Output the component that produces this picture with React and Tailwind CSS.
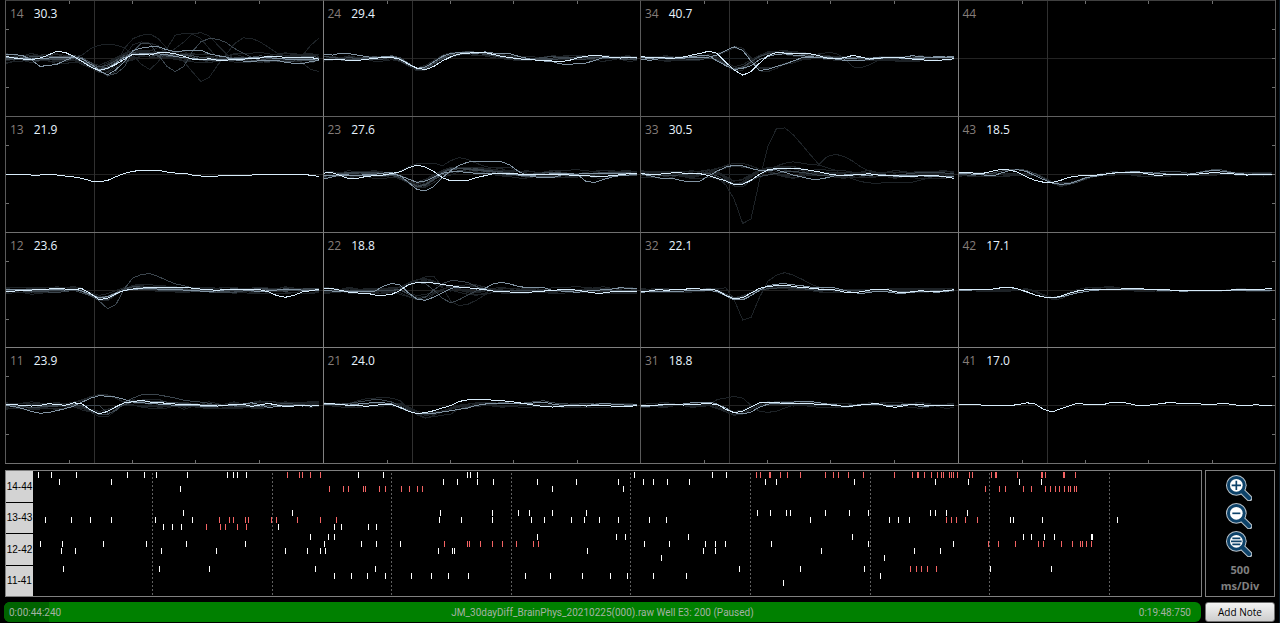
import { Fragment } from "react"

const SAMPLES = 38
const STEP = 25.46
const MID = 174

const COLORS = {
  bright: "#d8ecfb",
  mid: "#8193a2",
  dim: "#3c464e",
  faint: "#1d2226",
}

// samples outside the given window stay on the baseline
const pad = (start, values) =>
  Array.from({ length: SAMPLES }, (_, i) => values[i - start] ?? 0)

const SPIKE = pad(8, [-4, 2, 18, 32, 28, 12, -4, -12, -15, -16, -15, -12, -8, -5, -3])
const SMALL = pad(8, [-4, 2, 14, 24, 22, 10, 0, -5, -7, -8, -7, -5, -3])
const HILL = pad(7, [-3, -10, -18, -26, -30, -28, -20, -10, -4, 2, 6, 8, 5])
const LATE = pad(9, [-2, 8, 24, 32, 28, 22, 14, 6, 2, -2, -4, -3])

// slow wandering noise added on top of a base shape
const jitter = (base, amp, seed) => {
  let s = seed * 7919 + 17
  const next = () => {
    s = (s * 1103515245 + 12345) % 2147483648
    return (s / 2147483648) * 2 - 1
  }
  const knots = Array.from({ length: 14 }, () => next() * amp)
  return base.map((v, i) => {
    const k = Math.floor(i / 3)
    const t = (i % 3) / 3
    return v + knots[k] * (1 - t) + knots[k + 1] * t
  })
}

const bundle = (base, count, amp, tone, seed) =>
  Array.from({ length: count }, (_, i) => [tone, jitter(base, amp, seed + i * 3)])

const ELECTRODES = [
  {
    id: "14",
    value: "30.3",
    traces: [
      ...bundle(SPIKE, 8, 18, "faint", 3),
      ...bundle(SPIKE, 3, 10, "dim", 41),
      ["faint", pad(8, [-4, -10, -30, -40, -43, -40, -32, -10, 18, 34, 10, -30, -70, -76, -74, -60, -30, 0, 0, 4])],
      ["faint", pad(9, [4, 20, 30, 40, 20, -30, -60, -70, -74, -60, -30, -10, 10, 40, 70, 58, 20, -12, -44, -62, -61, -50, -34, -16, -8, -4, -8, -40, -62, -68])],
      ["faint", pad(10, [22, 36, 54, 40, -5, -42, -50, -46, -38, -10, -30, -50, -74, -78, -68, -40, -14, 0, 6, 8, 10, 12, 8, 6, 4, 14, 34, 40])],
      ["dim", pad(10, [22, 36, 52, 46, 26, -20, -46, -44, -10, 24, 40, 24, -20, -50, -60, -58, -48, -30, -16, -4, 6])],
      ["mid", [-12, -12, -8, 4, 24, 22, 18, 6, -4, 8, 26, 38, 50, 34, 10, -24, -31, -35, -35, -26, -20, -23, -25, -25, -14, -8, -4, 4, 8, 11, 6, 5, 6, 12, 15, 16, 10, 6]],
      ["mid", jitter(SPIKE, 4, 8)],
      ["bright", [-6, -1, 2, 4, -1, -10, -22, -18, -6, 10, 26, 37, 30, 18, 3, -13, -13, -10, -17, -18, -14, -6, 2, 4, 1, 6, 6, 2, 3, -1, -1, -7, -6, -3, -3, -3, -3, 3]],
    ],
  },
  {
    id: "24",
    value: "29.4",
    traces: [
      ...bundle(SPIKE, 7, 9, "faint", 12),
      ...bundle(SPIKE, 3, 6, "dim", 25),
      ["mid", [-13, -10, -16, -14, -10, -5, -2, -5, -6, 2, 16, 30, 26, 10, -6, -15, -18, -17, -15, -20, -16, -16, -14, -6, 0, 5, 8, 10, 17, 18, 16, 14, 6, -2, -3, -2, -2, -1]],
      ["bright", [3, 3, 2, 8, 6, 3, 0, -3, -3, 3, 18, 30, 34, 24, 8, -5, -13, -16, -17, -18, -12, -6, -2, 1, 4, 5, 6, 8, 10, 6, -2, -7, -8, -7, -3, -1, -2, -2]],
    ],
  },
  {
    id: "34",
    value: "40.7",
    traces: [
      ...bundle(SPIKE, 5, 9, "faint", 7),
      ...bundle(pad(8, [-8, -10, -20, -32, -24, 4, 34, 34, 26, 14, 6]), 3, 8, "faint", 33),
      ["faint", pad(20, [-8, -14, -17, -16, 0, 26, 28, 20, 6])],
      ["dim", jitter(SPIKE, 4, 18)],
      ["mid", [-2, 0, -2, -4, 0, 0, -6, -8, -8, 8, 22, 34, 30, 22, 4, -6, -12, -14, -10, -8, -6, -2, 0, 2, 6, 8, 6, 4, 0, -2, -4, -3, -8, -6, -2, -6, -4, -5]],
      ["mid", [2, 6, 2, 0, 0, -4, -2, -4, -4, -10, -24, -35, -24, 8, 37, 33, 25, 17, 8, -2, -3, -4, -3, 0, 2, 0, -2, 0, -3, -4, -2, 0, 2, 0, -2, -3, -2, -2]],
      ["bright", [-5, -3, -2, -1, -1, -4, -10, -15, -22, -15, 12, 35, 51, 40, 15, -8, -18, -16, -15, -14, -14, -8, -1, 2, -2, -9, -4, 2, 0, -3, -3, -2, 2, 4, 6, 6, 4, 1]],
    ],
  },
  { id: "44", value: "", traces: [] },
  {
    id: "13",
    value: "21.9",
    traces: [
      ["bright", [2, -1, -1, 2, 2, -1, 2, 5, 8, 12, 20, 23, 18, 7, -3, -9, -13, -13, -13, -7, -4, -4, 2, 5, 5, 5, 2, 2, 5, 2, -1, -1, -1, -1, -1, -1, 3, 6]],
    ],
  },
  {
    id: "23",
    value: "27.6",
    traces: [
      ...bundle(SPIKE, 7, 14, "faint", 9),
      ...bundle(SPIKE, 3, 8, "dim", 52),
      ["faint", pad(8, [0, -10, -24, -32, -34, -34, -26, -42, -51, -45, -34, -24, -20, -22, -20, -10, -4])],
      ["mid", jitter(SMALL, 5, 14)],
      ["mid", [14, 8, 0, 2, 4, 0, 0, -4, -6, 4, 25, 46, 50, 36, 10, -12, -28, -37, -40, -40, -40, -38, -28, -8, 3, 8, 11, 10, 2, -4, 2, 22, 24, 16, 8, 4, 2, -1]],
      ["bright", [-4, -5, 4, 14, 12, 6, 4, 2, -3, -8, -20, -28, -22, -8, 10, 20, 20, 18, 10, 4, -2, -3, -2, -1, -1, 0, 0, -1, 0, 2, 4, 4, 6, 6, 4, 1, -2, -4]],
    ],
  },
  {
    id: "33",
    value: "30.5",
    traces: [
      ...bundle(SPIKE, 7, 14, "faint", 19),
      ...bundle(HILL, 3, 8, "faint", 71),
      ["faint", pad(9, [10, 32, 75, 149, 135, 20, -85, -138, -141, -120, -90, -60, -30, -54, -61, -54, -40, -22, -10, -2])],
      ["faint", pad(14, [-10, -15, -25, -34, -38, -34, -30, -28, -20, -12, 4, 14, 22, 26, 27, 25, 24, 26, 24, 18, 10, 4])],
      ["dim", jitter(SMALL, 7, 12)],
      ["mid", [-2, 4, 10, 14, 14, 20, 23, 20, 4, -10, -22, -28, -26, -18, -12, -12, -14, -6, 2, 8, 14, 15, 10, 4, 2, 0, 2, 3, 0, 2, 6, 4, 2, 4, 6, 6, 6, 6]],
      ["bright", [-2, 0, 0, -3, -5, -4, -3, -2, 4, 12, 20, 31, 30, 18, 0, -14, -18, -18, -19, -16, -12, -8, -2, 2, 4, 2, 0, -2, 2, 4, 4, 6, 8, 4, 2, 4, 8, 12]],
    ],
  },
  {
    id: "43",
    value: "18.5",
    traces: [
      ...bundle(LATE, 5, 7, "faint", 5),
      ["dim", [0, 2, 2, 0, -4, -10, -14, -16, -12, -2, 12, 25, 32, 30, 24, 12, 4, 0, -3, -6, -8, -6, -4, -4, -8, -9, -8, -4, -4, -10, -14, -14, -8, -2, 0, -2, -2, -1]],
      ["mid", [-2, -2, 0, 2, 5, -4, -12, -14, -8, 4, 16, 26, 30, 28, 20, 10, 6, 2, -4, -7, -7, -8, -6, -4, -2, 0, 0, 0, -4, -8, -12, -10, -6, -3, 0, 0, -1, 0]],
      ["bright", [-6, -6, -3, -4, -10, -15, -13, -6, 8, 18, 24, 25, 18, 9, 5, 4, 3, 0, -3, -6, -6, -7, -3, 2, 2, 0, 0, 2, 0, -3, -5, -4, -2, 0, 2, 1, 0, -1]],
    ],
  },
  {
    id: "12",
    value: "23.6",
    traces: [
      ...bundle(SMALL, 7, 12, "faint", 4),
      ...bundle(SMALL, 3, 7, "dim", 23),
      ["dim", pad(9, [2, 14, 32, 56, 42, -5, -38, -48, -51, -42, -30, -20, -14, -8])],
      ["mid", jitter(SMALL, 5, 26)],
      ["bright", [4, 2, 0, -1, -2, -4, -6, -4, -3, -5, 10, 28, 24, 10, 0, -4, -7, -8, -9, -9, -9, -8, -7, -4, -2, 0, -4, -3, -2, -3, -2, 4, 16, 21, 15, 5, 1, -3]],
    ],
  },
  {
    id: "22",
    value: "18.8",
    traces: [
      ...bundle(HILL, 4, 11, "faint", 15),
      ...bundle(SMALL, 4, 11, "faint", 63),
      ["faint", pad(9, [-4, -18, -30, -42, -42, -10, 34, 46, 42, 30, 14, 4])],
      ["dim", pad(9, [-4, -16, -24, -20, 0, 24, 38, 28, 14, 2, -4])],
      ["dim", pad(9, [-2, 12, 27, 20, -2, -20, -30, -28, -24, -12])],
      ["mid", [0, 2, 2, 4, 4, 4, 2, -12, -21, -16, 8, 27, 30, 20, 8, -6, -10, -8, -4, -6, -20, -24, -19, -12, -8, -10, -8, 0, 2, 4, 6, 2, 0, -2, -4, -8, -6, -4]],
      ["bright", [-5, -5, 0, 6, 8, 8, 14, 15, 12, 0, -18, -24, -24, -22, -18, -14, -10, -8, -5, -2, 2, 4, 5, 6, 6, 4, 2, 0, -2, -3, 0, 4, 8, 8, 4, 2, 3, 4]],
    ],
  },
  {
    id: "32",
    value: "22.1",
    traces: [
      ...bundle(SMALL, 6, 7, "faint", 2),
      ["faint", pad(9, [-4, -8, 28, 90, 82, 22, -28, -46, -54, -46, -34, -20, -10])],
      ["dim", jitter(SMALL, 5, 35)],
      ["mid", [6, 4, 4, 2, 3, 2, 0, 0, 0, 4, 16, 29, 29, 16, 0, -14, -19, -20, -17, -14, -10, -8, -10, -7, 0, 6, 10, 6, 2, 4, 8, 9, 6, 3, 4, 6, 3, 0]],
      ["bright", [2, 2, -3, 0, -3, -3, -6, -4, -4, 0, 15, 26, 22, 8, -6, -12, -14, -16, -12, -8, -7, -4, -4, -1, 5, 8, 4, -1, -3, -3, 4, 8, 4, 1, 3, 4, 1, -2]],
    ],
  },
  {
    id: "42",
    value: "17.1",
    traces: [
      ...bundle(SMALL, 4, 5, "faint", 6),
      ["mid", [0, 0, -2, -2, -4, -8, -8, -4, 6, 14, 20, 22, 20, 14, 8, 3, 0, -2, -3, -3, -4, -4, -3, -2, 0, 0, 2, 2, 0, 0, 0, -1, -1, 0, 0, 0, -1, -1]],
      ["bright", [-2, -2, -3, -4, -4, -8, -10, -4, 4, 14, 20, 23, 18, 9, 2, -2, -4, -3, -3, -4, -5, -5, -4, -3, -2, -1, 0, 0, 0, 0, -1, 0, -1, -2, -4, -2, -4, -5]],
    ],
  },
  {
    id: "11",
    value: "23.9",
    traces: [
      ...bundle(SMALL, 7, 14, "faint", 11),
      ...bundle(HILL, 2, 8, "faint", 45),
      ["dim", pad(12, [24, 16, -10, -22, -32, -33, -32, -27, -22, -16, -12, -10, -6])],
      ["dim", jitter(SMALL, 7, 16)],
      ["mid", [0, 4, 10, 18, 24, 22, 16, 10, 2, -10, -22, -29, -28, -25, -18, -10, -8, -6, -4, -2, 0, 0, 0, 2, 3, 2, 0, 0, -4, -8, -2, 6, 4, 0, 0, 2, 0, 0]],
      ["bright", [-3, -2, 0, 2, 0, -5, -3, 0, -8, -4, 14, 26, 18, 4, -8, -11, -16, -10, -9, -6, -4, -4, -3, -1, 0, 2, 0, -4, -3, 3, -1, -6, -1, 4, 2, 0, 2, 1]],
    ],
  },
  {
    id: "21",
    value: "24.0",
    traces: [
      ...bundle(LATE, 5, 8, "faint", 13),
      ["faint", pad(3, [-6, -14, -20, -22, -24, -22, -14, 10, 26, 38, 34, 30, 26, 10, 4])],
      ["dim", [-6, -5, -4, -6, -10, -14, -18, -16, -10, 2, 16, 26, 26, 22, 20, 16, 12, 6, 0, -4, -6, -8, -7, -6, -8, -12, -14, -8, -5, -4, -4, -6, -4, -6, -4, -4, -3, -4]],
      ["mid", [-3, -4, -2, -1, -4, -6, -10, -8, -4, 8, 18, 25, 25, 24, 20, 16, 12, 8, 0, -4, -6, -7, -6, -6, -5, -8, -10, -4, 0, 0, 2, 0, -2, -6, -4, -2, 0, -2]],
      ["bright", [-5, -5, -2, 0, 0, 3, 0, -3, -2, 6, 18, 25, 22, 16, 8, 0, -12, -17, -18, -17, -16, -14, -12, -8, -4, 0, 4, 5, 3, 0, 1, 2, 0, 1, 2, 3, 4, 0]],
    ],
  },
  {
    id: "31",
    value: "18.8",
    traces: [
      ...bundle(SMALL, 5, 9, "faint", 21),
      ["faint", pad(9, [-18, -22, -27, -22, 0, 18, 21, 18, 8])],
      ["mid", [2, 2, 0, -2, -4, -4, -8, -10, -10, -4, 8, 22, 26, 20, 6, -4, -6, -8, -10, -12, -12, -8, -4, -2, 4, 0, -2, -4, -3, 0, 2, -2, -4, 4, 2, 0, 0, 0]],
      ["bright", [0, 0, -1, -4, -4, -1, -3, -4, -5, -3, 12, 22, 18, 5, -8, -8, -8, -6, -5, -6, -5, -3, -2, 0, 3, 2, -1, -4, -5, 2, 6, 2, -4, -2, 0, 0, -1, -1]],
    ],
  },
  {
    id: "41",
    value: "17.0",
    traces: [
      ["bright", [-2, -3, -3, 0, 2, 0, 0, -2, -8, -4, 12, 20, 10, 2, -6, -3, -4, -2, -9, -10, -6, 0, 0, -2, -6, -9, -6, -7, -6, -3, -2, -6, -4, 0, 2, -2, 0, 0]],
    ],
  },
]

const COL_BORDERS = ["border-l-[#5a5a5a]", "border-l-[#808080]", "border-l-[#5a5a5a]", "border-l-[#808080]"]
const ROW_BORDERS = ["border-t-[#404040]", "border-t-[#606060]", "border-t-[#707070]", "border-t-[#808080]"]

// [row, white spikes, burst spikes]; rows count down from the first electrode
const RASTER = [
  [0, [38, 51, 76, 127, 144, 156, 187, 227, 233, 237, 246, 358, 383, 467, 470, 477, 634, 712, 726],
    [287, 299, 302, 310, 320, 756, 760, 769, 770, 780, 787, 800, 825, 833, 838, 848, 863, 894, 912, 917, 918, 924, 931, 937, 941, 943, 949, 951, 953, 957, 969, 972, 991, 995, 996, 1017, 1041, 1042, 1045, 1063, 1064, 1075]],
  [1, [59, 111, 443, 457, 477, 493, 537, 576, 618, 643, 653, 667, 689, 765, 776, 854, 935, 968, 1019, 1041], []],
  [2, [180, 552, 623],
    [329, 343, 348, 363, 365, 379, 385, 401, 409, 417, 422, 985, 999, 1005, 1023, 1031, 1045, 1050, 1055, 1059, 1064, 1068, 1070, 1074, 1076]],
  [5, [183, 292, 440, 492, 518, 529, 552, 586, 757, 770, 786, 790, 825, 849, 868, 930, 935, 946, 967], []],
  [6, [45, 71, 90, 111, 155, 192, 439, 461, 492, 531, 544, 571, 584, 599, 618, 649, 666, 810, 889, 898, 909, 1010, 1013, 1042, 1117],
    [219, 229, 233, 245, 248, 271, 276, 297, 320, 336, 946, 951, 956, 965, 977]],
  [7, [163, 172, 181, 278, 334, 341, 368, 376], [206, 220, 225, 237, 246]],
  [8, [310, 328, 334, 537, 616, 625, 688, 852, 1023, 1031, 1044, 1054, 1091, 1092], []],
  [9, [40, 62, 103, 146, 186, 245, 324, 361, 376, 400, 644, 669, 705, 715, 725, 771, 868, 953],
    [444, 467, 469, 480, 492, 502, 516, 533, 538, 988, 998, 1015, 1038, 1043, 1061, 1072, 1080, 1082, 1086, 1091]],
  [10, [61, 75, 161, 216, 285, 307, 320, 325, 438, 452, 454, 587, 703, 715, 821, 914, 940], []],
  [11, [661, 884], []],
  [12, [63, 159, 209, 315, 375, 739, 800, 864, 990, 1051], [910, 916, 921, 927, 936]],
  [13, [334, 351, 367, 385, 411, 431, 448, 468, 525, 550, 582, 610, 627, 653, 686, 880], []],
  [14, [783], []],
]
const GROUP_TOPS = [1, 32, 63, 95]
const DIVISIONS = [152, 272, 391, 511, 630, 750, 870, 989, 1109]
const PLOT_LEFT = 33

const Waveform = ({ electrode, col, row }) => (
  <svg
    viewBox="0 0 952 348"
    preserveAspectRatio="none"
    shapeRendering="crispEdges"
    className="absolute inset-0 h-full w-full"
    aria-hidden="true"
  >
    <g stroke="#232323" fill="none">
      <path d="M0 174H952" vectorEffect="non-scaling-stroke" />
      <path d="M266 0V348" stroke="#303030" vectorEffect="non-scaling-stroke" />
    </g>
    <g stroke="#707070" fill="none">
      {row === 0 &&
        [190, 381, 571, 762].map((x) => <path key={x} d={`M${x} 0V9`} vectorEffect="non-scaling-stroke" />)}
      {row === 3 &&
        [190, 381, 571, 762].map((x) => <path key={x} d={`M${x} 339V348`} vectorEffect="non-scaling-stroke" />)}
      {col === 0 && [87, 261].map((y) => <path key={y} d={`M0 ${y}H10`} vectorEffect="non-scaling-stroke" />)}
      {col === 3 && [87, 174, 261].map((y) => <path key={y} d={`M942 ${y}H952`} vectorEffect="non-scaling-stroke" />)}
    </g>
    {electrode.traces.map(([tone, ys], i) => (
      <polyline
        key={i}
        points={ys.map((y, k) => `${Math.round(k * STEP)},${Math.round(MID + y)}`).join(" ")}
        fill="none"
        stroke={COLORS[tone]}
        vectorEffect="non-scaling-stroke"
      />
    ))}
  </svg>
)

const ElectrodeGrid = () => (
  <section
    aria-label="Electrode waveforms"
    className="mr-[3px] ml-[5px] grid min-h-[400px] flex-1 grid-cols-4 grid-rows-4 border-r border-b border-r-[#5a5a5a] border-b-[#707070]"
  >
    {ELECTRODES.map((electrode, i) => {
      const col = i % 4
      const row = Math.floor(i / 4)
      return (
        <div key={electrode.id} className={`relative border-t border-l ${COL_BORDERS[col]} ${ROW_BORDERS[row]}`}>
          <Waveform electrode={electrode} col={col} row={row} />
          <div className="relative flex gap-[10px] px-1 pt-[5px] text-xs leading-4">
            <span className="text-[#857d7a]">{electrode.id}</span>
            <span className="text-[#e8f4ff]">{electrode.value}</span>
          </div>
        </div>
      )
    })}
  </section>
)

const SpikeRaster = () => (
  <section aria-label="Spike raster" className="flex h-[127px] min-w-0 flex-1 border border-[#808080]">
    <div className="grid w-[27px] shrink-0 grid-rows-4 gap-px font-['Liberation_Sans',sans-serif] text-[10px] text-black">
      {["14-44", "13-43", "12-42", "11-41"].map((label) => (
        <div key={label} className="flex items-center justify-center bg-[#d3d3d3]">
          {label}
        </div>
      ))}
    </div>
    <svg
      viewBox="0 0 1168 125"
      preserveAspectRatio="none"
      shapeRendering="crispEdges"
      className="h-full min-w-0 flex-1"
      aria-hidden="true"
    >
      {DIVISIONS.map((x) => (
        <path key={x} d={`M${x - PLOT_LEFT + 0.5} 2V125`} stroke="#606060" strokeDasharray="2 2" />
      ))}
      {RASTER.map(([row, spikes, bursts]) => {
        const y = GROUP_TOPS[Math.floor(row / 4)] + (row % 4) * 7
        return (
          <Fragment key={row}>
            {spikes.map((x) => (
              <rect key={x} x={x - PLOT_LEFT} y={y} width="1" height="6" fill="#ffffff" />
            ))}
            {bursts.map((x) => (
              <rect key={x} x={x - PLOT_LEFT} y={y} width="1" height="6" fill="#f46464" />
            ))}
          </Fragment>
        )
      })}
    </svg>
  </section>
)

const Magnifier = ({ children }) => (
  <svg viewBox="0 0 78 78" className="h-[26px] w-[26px]" aria-hidden="true">
    <path d="M50 50L70 70" stroke="#b9c3cb" strokeWidth="19" strokeLinecap="round" />
    <circle cx="31" cy="31" r="31" fill="#b9c3cb" />
    <path d="M48 48L69 69" stroke="#0d4269" strokeWidth="13" strokeLinecap="round" />
    <circle cx="31" cy="31" r="28" fill="#0d4269" />
    <circle cx="31" cy="31" r="19" fill="#ffffff" />
    <g stroke="#0d4269" strokeWidth="5" fill="none">
      {children}
    </g>
  </svg>
)

const ZoomPanel = () => (
  <aside className="flex h-[127px] w-[70px] shrink-0 flex-col items-center border border-[#808080] pt-1">
    <div className="flex flex-col gap-[2px] pr-[2px]">
      <button type="button" aria-label="Zoom in" className="block">
        <Magnifier>
          <path d="M17 31H45M31 17V45" />
        </Magnifier>
      </button>
      <button type="button" aria-label="Zoom out" className="block">
        <Magnifier>
          <path d="M19 31H43" />
        </Magnifier>
      </button>
      <button type="button" aria-label="Reset zoom" className="block">
        <Magnifier>
          <path d="M19 22H43M15 31H47M19 40H43" />
        </Magnifier>
      </button>
    </div>
    <div className="pt-[5px] text-center text-[11px] leading-4 font-bold text-[#808080]">
      500
      <br />
      ms/Div
    </div>
  </aside>
)

const StatusBar = () => (
  <div className="relative grid h-5 min-w-0 flex-1 grid-cols-[1fr_auto_1fr] items-center overflow-hidden rounded-md bg-[#008000] font-[Roboto,sans-serif] text-[10px] text-[#a3b3a3]">
    <div className="absolute inset-y-0 left-0 bg-[#006400]" style={{ width: `${(44.24 / 1188.75) * 100}%` }}></div>
    <span className="relative pl-[5px]">0:00:44:240</span>
    <span className="relative">JM_30dayDiff_BrainPhys_20210225(000).raw Well E3: 200 (Paused)</span>
    <span className="relative pr-[10px] text-right">0:19:48:750</span>
  </div>
)

const App = () => {
  return (
    <main className="flex min-h-screen flex-col border-r border-[#0b1a26] bg-black pb-px font-['Open_Sans','Noto_Sans',sans-serif]">
      <ElectrodeGrid />
      <div className="mt-[6px] flex gap-[3px] pr-1 pl-[5px]">
        <SpikeRaster />
        <ZoomPanel />
      </div>
      <div className="mt-[5px] flex gap-1 pr-1 pl-1">
        <StatusBar />
        <button
          type="button"
          className="h-5 w-[70px] shrink-0 rounded-[3px] border border-[#707070] bg-linear-to-b from-[#f4f4f4] to-[#cdcdcd] text-[10px] leading-4 text-black"
        >
          Add Note
        </button>
      </div>
    </main>
  )
}

export default App
